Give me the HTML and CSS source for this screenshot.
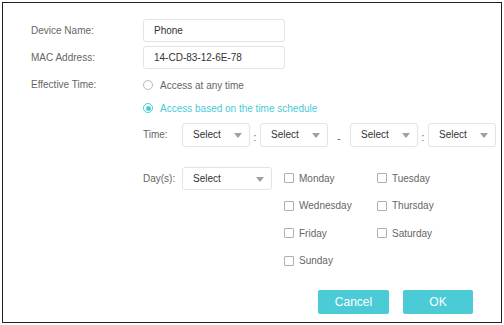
FILE: index.html
```html
<!DOCTYPE html>
<html lang="en">
<head>
    <meta charset="UTF-8">
    <title>Edit Device</title>
    <link rel="stylesheet" href="styles.css">
</head>
<body>
    <div class="dialog">
        <div class="field">
            <span class="label">Device Name:</span>
            <div class="input">Phone</div>
        </div>
        <div class="field">
            <span class="label">MAC Address:</span>
            <div class="input">14-CD-83-12-6E-78</div>
        </div>
        <div class="field field-top">
            <span class="label label-radio">Effective Time:</span>
            <div class="schedule">
                <label class="radio"><span class="dot"></span>Access at any time</label>
                <label class="radio checked"><span class="dot"></span>Access based on the time schedule</label>

                <div class="time-row">
                    <span class="sub-label">Time:</span>
                    <div class="select">Select<span class="arrow"></span></div>
                    <span class="sep">:</span>
                    <div class="select">Select<span class="arrow"></span></div>
                    <span class="sep sep-dash">-</span>
                    <div class="select">Select<span class="arrow"></span></div>
                    <span class="sep">:</span>
                    <div class="select">Select<span class="arrow"></span></div>
                </div>

                <div class="day-row">
                    <span class="sub-label">Day(s):</span>
                    <div class="select select-wide">Select<span class="arrow"></span></div>
                    <div class="days">
                        <label class="check"><span class="box"></span>Monday</label>
                        <label class="check"><span class="box"></span>Tuesday</label>
                        <label class="check"><span class="box"></span>Wednesday</label>
                        <label class="check"><span class="box"></span>Thursday</label>
                        <label class="check"><span class="box"></span>Friday</label>
                        <label class="check"><span class="box"></span>Saturday</label>
                        <label class="check"><span class="box"></span>Sunday</label>
                    </div>
                </div>
            </div>
        </div>
        <div class="actions">
            <button class="btn">Cancel</button>
            <button class="btn btn-ok">OK</button>
        </div>
    </div>
</body>
</html>
```

FILE: styles.css
```css
/* dialog frame */
body {
    margin: 0;
    background: #ffffff;
    font-family: "Liberation Sans", Arial, sans-serif;
    font-size: 10px;
    color: #666666;
}

.dialog {
    box-sizing: border-box;
    width: 500px;
    height: 321px;
    margin: 2px 0 0 2px;
    border: 1px solid #222222;
    padding: 16px 28px 0 28px;
    overflow: hidden;
    display: flex;
    flex-direction: column;
}

.field {
    display: flex;
    align-items: center;
    margin-bottom: 4px;
}

.field-top {
    align-items: flex-start;
    margin-top: 4px;
}

.label {
    width: 112px;
    flex-shrink: 0;
}

.label-radio {
    line-height: 16px;
}

.input {
    box-sizing: border-box;
    width: 142px;
    height: 23px;
    border: 1px solid #e3e3e3;
    border-radius: 3px;
    padding: 0 10px;
    line-height: 21px;
    color: #333333;
}

/* radios */
.radio {
    display: flex;
    align-items: center;
    height: 16px;
    margin-bottom: 7px;
}

.dot {
    box-sizing: border-box;
    width: 10px;
    height: 10px;
    border: 1px solid #b8b8b8;
    border-radius: 50%;
    margin-right: 7px;
    position: relative;
}

.radio.checked {
    color: #4acbd6;
}

.radio.checked .dot {
    border-color: #4acbd6;
}

.radio.checked .dot::after {
    content: "";
    position: absolute;
    left: 1.5px;
    top: 1.5px;
    width: 5px;
    height: 5px;
    border-radius: 50%;
    background: #4acbd6;
}

/* time + day rows */
.time-row {
    display: flex;
    align-items: center;
    margin-top: 2px;
    width: 400px;
}

.sub-label {
    width: 39px;
    flex-shrink: 0;
    line-height: 16px;
}

.select {
    box-sizing: border-box;
    flex-shrink: 0;
    width: 68px;
    height: 24px;
    border: 1px solid #e3e3e3;
    border-radius: 3px;
    padding: 0 10px;
    line-height: 21px;
    color: #333333;
    position: relative;
}

.select-wide {
    width: 90px;
    height: 23px;
}

.arrow {
    position: absolute;
    right: 7px;
    top: 9px;
    border-left: 4px solid transparent;
    border-right: 4px solid transparent;
    border-top: 5px solid #a0a0a0;
}

.sep {
    width: 10px;
    text-align: center;
    flex-shrink: 0;
    padding-top: 5px;
    color: #555555;
}

.sep-dash {
    width: 22px;
    padding-top: 6px;
}

.day-row {
    display: flex;
    align-items: flex-start;
    margin-top: 20px;
}

.day-row .sub-label {
    line-height: 23px;
}

.days {
    display: grid;
    grid-template-columns: 93px 93px;
    row-gap: 11.5px;
    margin: 3px 0 0 12px;
}

.check {
    display: flex;
    align-items: center;
    height: 16px;
}

.box {
    box-sizing: border-box;
    width: 10px;
    height: 10px;
    border: 1px solid #b0b0b0;
    border-radius: 1px;
    margin-right: 5px;
}

/* buttons */
.actions {
    display: flex;
    justify-content: flex-end;
    gap: 14px;
    margin-top: 17px;
}

.btn {
    width: 71px;
    height: 24px;
    border: none;
    border-radius: 2px;
    background: #4acbd6;
    color: #ffffff;
    font-family: "Liberation Sans", Arial, sans-serif;
    font-size: 12px;
    padding: 0;
}

.btn-ok {
    width: 70px;
}
```
